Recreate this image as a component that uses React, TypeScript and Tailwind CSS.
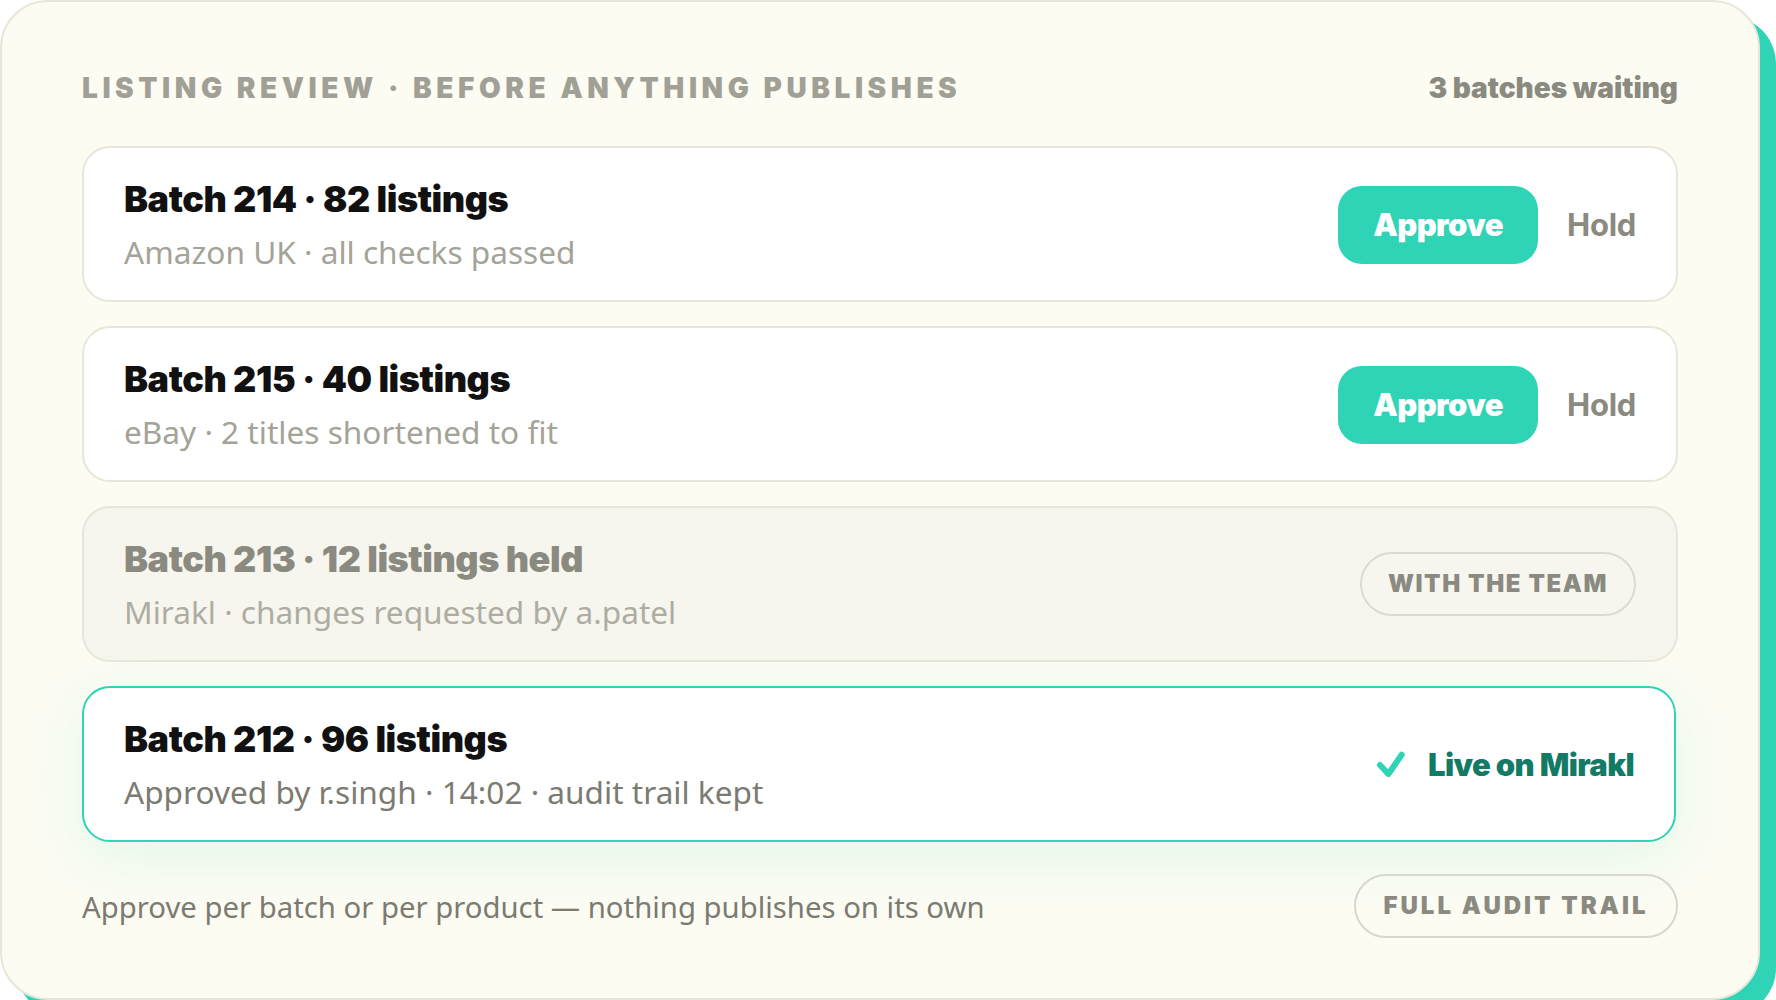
import React from "react";

function Title({ children, cls }: { children: React.ReactNode; cls: string }) {
  return (
    <div className={`text-[36px] leading-[44px] font-black tracking-[-0.45px] font-['Inter',sans-serif] ${cls}`}>{children}</div>
  );
}

function Sub({ children, cls }: { children: React.ReactNode; cls: string }) {
  return (
    <div className={`mt-[11px] text-[31.6px] leading-[40px] font-['Noto_Sans',sans-serif] ${cls}`}>{children}</div>
  );
}

function Actions() {
  return (
    <div className="mt-[2px] flex items-center gap-[29px]">
      <button className="flex h-[78px] w-[200px] items-center justify-center rounded-[24px] bg-[#2fd3b5] font-['Inter',sans-serif] text-[31px] font-black tracking-[-0.6px] text-white">
        Approve
      </button>
      <span className="font-['Inter',sans-serif] text-[31px] font-bold tracking-[-0.3px] text-[#8a8a80]">Hold</span>
    </div>
  );
}

function Row({ border, bg, shadow, children }: { border: string; bg: string; shadow?: string; children: React.ReactNode }) {
  return (
    <div className={`flex h-[156px] items-center justify-between rounded-[28px] border-2 px-[40px] ${border} ${bg} ${shadow ?? ""}`}>
      {children}
    </div>
  );
}

export default function App() {
  return (
    <div className="h-[1000px] w-[1776px] overflow-hidden bg-white">
      <div className="flex h-[1000px] w-[1760px] flex-col rounded-[48px] border-2 border-[#e8e6d9] bg-[#fcfcf3] px-[80px] pt-[68px] shadow-[16px_16px_0_#2fd3b5]">
        <div className="flex h-[36px] items-center justify-between">
          <span className="font-['Inter',sans-serif] text-[28px] font-black tracking-[4.56px] text-[#a0a096]">
            LISTING REVIEW · BEFORE ANYTHING PUBLISHES
          </span>
          <span className="font-['Inter',sans-serif] text-[28px] font-black tracking-[0px] text-[#8a8a80]">3 batches waiting</span>
        </div>
        <div className="mt-[40px] flex flex-col gap-[24px]">
          <Row border="border-[#e8e6d9]" bg="bg-white">
            <div>
              <Title cls="text-[#111111]">Batch 214 · 82 listings</Title>
              <Sub cls="text-[#a3a398]">Amazon UK · all checks passed</Sub>
            </div>
            <Actions />
          </Row>
          <Row border="border-[#e8e6d9]" bg="bg-white">
            <div>
              <Title cls="text-[#111111]">Batch 215 · 40 listings</Title>
              <Sub cls="text-[#a3a398]">eBay · 2 titles shortened to fit</Sub>
            </div>
            <Actions />
          </Row>
          <Row border="border-[#e8e6d9]" bg="bg-[#f6f6ee]">
            <div>
              <Title cls="text-[#8a8a80]">Batch 213 · 12 listings held</Title>
              <Sub cls="text-[#adada2]">Mirakl · changes requested by a.patel</Sub>
            </div>
            <span className="flex h-[64px] w-[276px] items-center justify-center rounded-full border-2 border-[#dcdad0] font-['Inter',sans-serif] text-[24px] font-black tracking-[1.6px] text-[#8a8a80]">
              WITH THE TEAM
            </span>
          </Row>
          <Row border="border-[#2fd3b5]" bg="bg-white" shadow="mr-[2px] shadow-[0_16px_56px_rgba(47,211,181,0.12)]">
            <div>
              <Title cls="text-[#111111]">Batch 212 · 96 listings</Title>
              <Sub cls="text-[#7b7b72]">Approved by r.singh · 14:02 · audit trail kept</Sub>
            </div>
            <div className="mt-[2px] flex items-center gap-[20px]">
              <svg width="32" height="28" viewBox="0 0 32 28" fill="none">
                <path d="M4 14 L12.4 23 L25.7 3.7" stroke="#2fd3b5" strokeWidth="6" strokeLinecap="round" strokeLinejoin="round" />
              </svg>
              <span className="font-['Inter',sans-serif] text-[31px] font-black tracking-[-0.6px] text-[#137a66]">Live on Mirakl</span>
            </div>
          </Row>
        </div>
        <div className="mt-[32px] flex items-center justify-between">
          <span className="mt-[4px] font-['Noto_Sans',sans-serif] text-[29.3px] text-[#7b7b72]">
            Approve per batch or per product — nothing publishes on its own
          </span>
          <span className="flex h-[64px] w-[324px] items-center justify-center rounded-full border-2 border-[#d9d7cd] font-['Inter',sans-serif] text-[24px] font-black tracking-[3px] text-[#8a8a80]">
            FULL AUDIT TRAIL
          </span>
        </div>
      </div>
    </div>
  );
}
